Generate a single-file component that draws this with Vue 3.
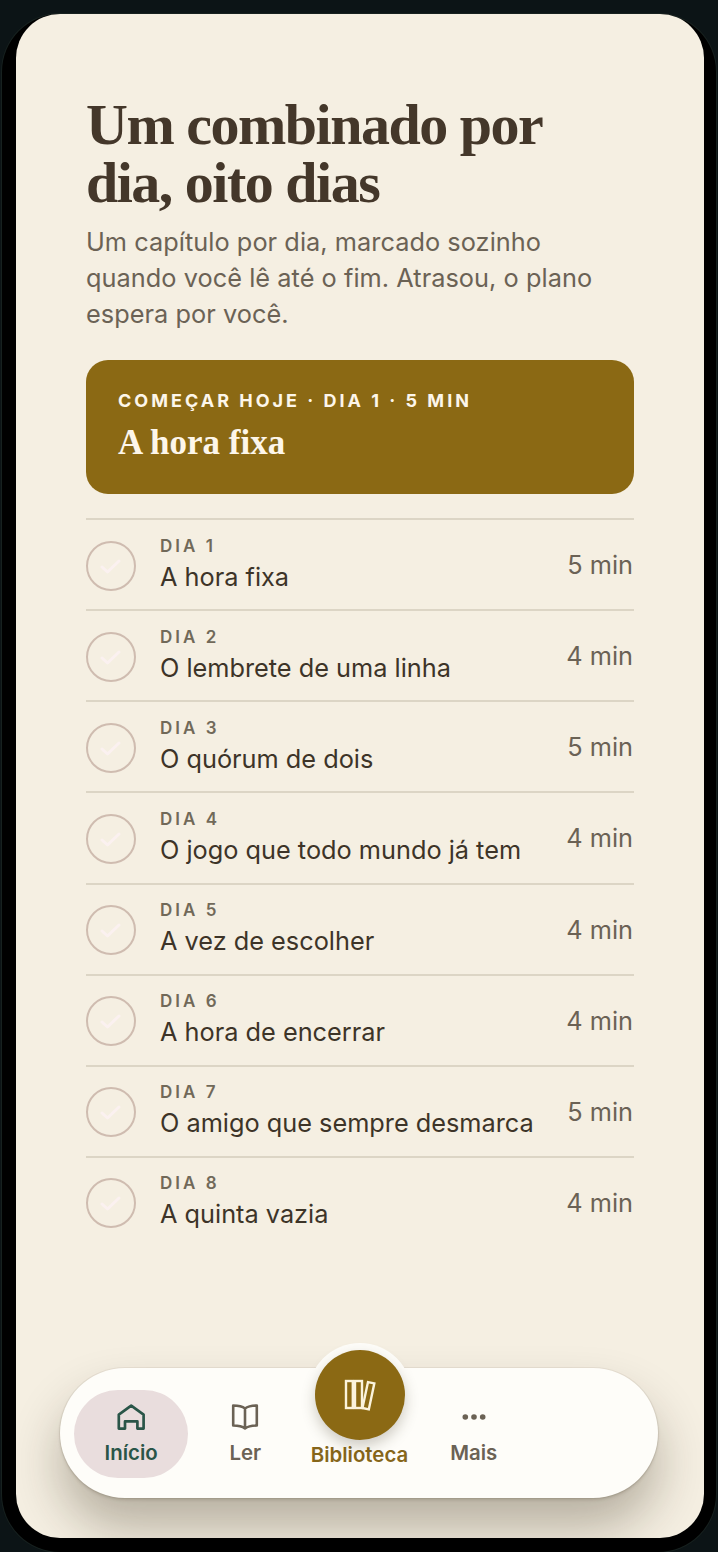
<template>
  <div class="device">
    <div class="frame">
      <main class="screen">
        <div class="content">
          <h1 class="title">Um combinado por<br>dia, oito dias</h1>
          <p class="lead">Um capítulo por dia, marcado sozinho quando você lê até o fim. Atrasou, o plano espera por você.</p>

          <section class="start">
            <div class="start-label">COMEÇAR HOJE · DIA 1 · 5 MIN</div>
            <div class="start-title">A hora fixa</div>
          </section>

          <ul class="days">
            <li v-for="d in days" :key="d.n" class="day">
              <span class="check">
                <svg width="24" height="24" viewBox="0 0 24 24" fill="none">
                  <path d="M3 13l5.500 5L20 7" stroke="#fbf1f0" stroke-width="3" stroke-linecap="round" stroke-linejoin="round" />
                </svg>
              </span>
              <div class="day-text">
                <div class="day-num">DIA {{ d.n }}</div>
                <div class="day-name">{{ d.name }}</div>
              </div>
              <div class="day-min">{{ d.min }} min</div>
            </li>
          </ul>
        </div>

        <nav class="tabbar">
          <div class="tab active">
            <svg class="icon" viewBox="0 0 30 30" fill="none" stroke="#2a5548" stroke-width="2.700" stroke-linejoin="round" stroke-linecap="round">
              <path d="M2.800 26.600V12.600L15.200 3.600l12.400 9v14h-6.200v-7.200H9v7.200z" />
            </svg>
            <span class="tab-label">Início</span>
          </div>
          <div class="tab">
            <svg class="icon" viewBox="0 0 30 30" fill="none" stroke="#6b6255" stroke-width="2.600" stroke-linejoin="round" stroke-linecap="round">
              <path d="M15 6.500C12.500 4.500 8 3.500 3.200 3.500v20c5 0 9.300 1 11.800 3 2.500-2 6.800-3 11.800-3v-20C22 3.500 17.500 4.500 15 6.500zM15 6.500v20" />
            </svg>
            <span class="tab-label">Ler</span>
          </div>
          <div class="tab center">
            <span class="fab">
              <svg width="32" height="32" viewBox="0 0 32 32" fill="none" stroke="#fbf3dc" stroke-width="2.400" stroke-linejoin="miter">
                <rect x="2" y="2" width="6.800" height="27" />
                <rect x="11" y="2" width="7" height="27" />
                <rect x="21.200" y="3.500" width="6.500" height="26.500" transform="rotate(12 24.500 16.500)" />
              </svg>
            </span>
            <span class="tab-label">Biblioteca</span>
          </div>
          <div class="tab">
            <svg class="icon" viewBox="0 0 30 30" fill="#6b6255">
              <circle cx="6.300" cy="15" r="2.800" />
              <circle cx="15" cy="15" r="2.800" />
              <circle cx="23.700" cy="15" r="2.800" />
            </svg>
            <span class="tab-label">Mais</span>
          </div>
        </nav>
      </main>
    </div>
  </div>
</template>

<script setup>
const days = [
  { n: 1, name: 'A hora fixa', min: 5 },
  { n: 2, name: 'O lembrete de uma linha', min: 4 },
  { n: 3, name: 'O quórum de dois', min: 5 },
  { n: 4, name: 'O jogo que todo mundo já tem', min: 4 },
  { n: 5, name: 'A vez de escolher', min: 4 },
  { n: 6, name: 'A hora de encerrar', min: 4 },
  { n: 7, name: 'O amigo que sempre desmarca', min: 5 },
  { n: 8, name: 'A quinta vazia', min: 4 }
]
</script>

<style>
html,
body {
  margin: 0;
  background: #0c1416;
}
</style>

<style scoped>
.device {
  width: 718px;
  height: 1552px;
  overflow: hidden;
  background: #0c1416;
}

.frame {
  box-sizing: border-box;
  width: 714px;
  height: 1538px;
  margin: 14px 0 0 2px;
  padding: 0 12px 14px 14px;
  background: #000;
  border-radius: 58px;
  box-shadow: 0 0 0 1px #17211f;
}

.screen {
  position: relative;
  box-sizing: border-box;
  width: 688px;
  height: 1524px;
  border-radius: 44px;
  overflow: hidden;
  background: #f5efe2;
  font-family: Inter, "Noto Sans", sans-serif;
}

.content {
  padding: 82px 70px 0;
}

.title {
  margin: 0;
  font-family: "Liberation Serif", serif;
  font-size: 58px;
  line-height: 58px;
  font-weight: 700;
  letter-spacing: -1.500px;
  color: #44372a;
}

.lead {
  max-width: 520px;
  margin: 12px 0 0;
  font-size: 25.300px;
  line-height: 36px;
  letter-spacing: 0.050px;
  color: #6b6255;
}

.start {
  margin-top: 28px;
  height: 134px;
  box-sizing: border-box;
  padding: 30px 32px 0;
  border-radius: 22px;
  background: #8b6914;
  color: #fdf6ea;
}

.start-label {
  font-size: 18px;
  line-height: 22px;
  font-weight: 700;
  letter-spacing: 3px;
}

.start-title {
  margin-top: 9px;
  font-family: "Liberation Serif", serif;
  font-size: 35px;
  line-height: 44px;
  font-weight: 700;
}

.days {
  list-style: none;
  margin: 24px 0 0;
  padding: 0;
}

.day {
  display: flex;
  align-items: center;
  height: 87.140px;
  padding-top: 2px;
  border-top: 2px solid #dcd5c5;
}

.check {
  flex: none;
  display: flex;
  align-items: center;
  justify-content: center;
  box-sizing: border-box;
  width: 50px;
  height: 50px;
  border: 2px solid #cfbcb0;
  border-radius: 50%;
}

.day-text {
  flex: 1;
  margin-left: 24px;
  padding-bottom: 3px;
}

.day-num {
  font-size: 17px;
  line-height: 22px;
  font-weight: 600;
  letter-spacing: 3px;
  color: #716959;
}

.day-name {
  margin-top: 3px;
  font-size: 25.300px;
  line-height: 34px;
  color: #3d3428;
}

.day-min {
  font-size: 25.300px;
  color: #6b6255;
  margin: 0 1px 2px 0;
}

.tabbar {
  position: absolute;
  left: 44px;
  top: 1354px;
  box-sizing: border-box;
  width: 598px;
  height: 130px;
  padding: 22px 14px 20px;
  display: flex;
  align-items: stretch;
  border-radius: 65px;
  background: #fefdf9;
  box-shadow: 0 0 0 1px rgba(80, 70, 50, 0.07), 0 2px 3px rgba(80, 70, 50, 0.2), 0 30px 50px rgba(40, 30, 10, 0.3);
}

.tab {
  position: relative;
  width: 114.200px;
  display: flex;
  flex-direction: column;
  align-items: center;
  justify-content: flex-end;
  padding-bottom: 13px;
  box-sizing: border-box;
  border-radius: 44px;
  color: #6b6255;
}

.tab.active {
  background: #e9dddd;
  color: #2a5548;
}

.icon {
  width: 30px;
  height: 30px;
  margin-bottom: 9px;
}

.tab-label {
  font-size: 20.400px;
  line-height: 24px;
  font-weight: 600;
}

.center {
  color: #86661a;
  padding-bottom: 11px;
}

.fab {
  position: absolute;
  top: -40px;
  left: 13px;
  display: flex;
  align-items: center;
  justify-content: center;
  width: 90px;
  height: 90px;
  border-radius: 50%;
  background: #8b6914;
  box-shadow: 0 6px 14px rgba(60, 50, 30, 0.25), 0 0 0 7px #fefdf9;
}
</style>
